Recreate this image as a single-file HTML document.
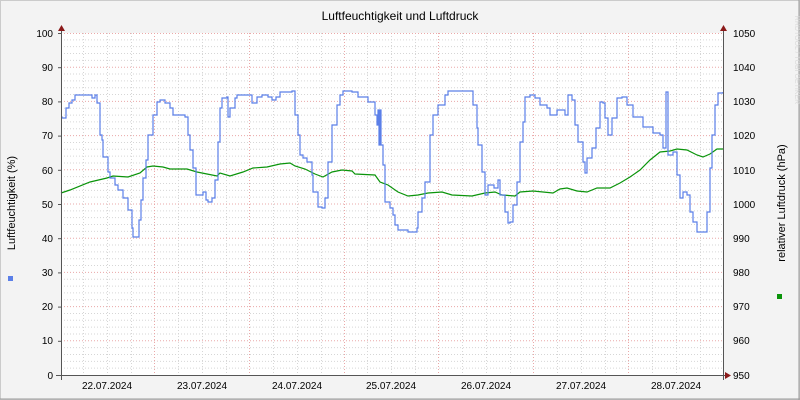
<!DOCTYPE html>
<html><head><meta charset="utf-8"><style>
html,body{margin:0;padding:0;background:#f3f3f3;}
svg{display:block;font-family:"Liberation Sans","DejaVu Sans",sans-serif;}
</style></head><body>
<svg width="800" height="400" viewBox="0 0 800 400" xmlns="http://www.w3.org/2000/svg">
<rect x="0" y="0" width="800" height="400" fill="#f3f3f3"/>
<rect x="0.5" y="0.5" width="799" height="399" fill="none" stroke="#cbcbcb"/>
<line x1="0" y1="399" x2="800" y2="399" stroke="#999" />
<line x1="799" y1="0" x2="799" y2="400" stroke="#999" />
<rect x="61" y="33" width="662" height="342" fill="#fff"/>
<g stroke="#d6d6d6" stroke-width="1" stroke-dasharray="1,2">
<line x1="61" x2="723" y1="39.84" y2="39.84"/><line x1="61" x2="723" y1="46.68" y2="46.68"/><line x1="61" x2="723" y1="53.52" y2="53.52"/><line x1="61" x2="723" y1="60.36" y2="60.36"/>
<line x1="61" x2="723" y1="74.04" y2="74.04"/><line x1="61" x2="723" y1="80.88" y2="80.88"/><line x1="61" x2="723" y1="87.72" y2="87.72"/><line x1="61" x2="723" y1="94.56" y2="94.56"/>
<line x1="61" x2="723" y1="108.24" y2="108.24"/><line x1="61" x2="723" y1="115.08" y2="115.08"/><line x1="61" x2="723" y1="121.92" y2="121.92"/><line x1="61" x2="723" y1="128.76" y2="128.76"/>
<line x1="61" x2="723" y1="142.44" y2="142.44"/><line x1="61" x2="723" y1="149.28" y2="149.28"/><line x1="61" x2="723" y1="156.12" y2="156.12"/><line x1="61" x2="723" y1="162.96" y2="162.96"/>
<line x1="61" x2="723" y1="176.64" y2="176.64"/><line x1="61" x2="723" y1="183.48" y2="183.48"/><line x1="61" x2="723" y1="190.32" y2="190.32"/><line x1="61" x2="723" y1="197.16" y2="197.16"/>
<line x1="61" x2="723" y1="210.84" y2="210.84"/><line x1="61" x2="723" y1="217.68" y2="217.68"/><line x1="61" x2="723" y1="224.52" y2="224.52"/><line x1="61" x2="723" y1="231.36" y2="231.36"/>
<line x1="61" x2="723" y1="245.04" y2="245.04"/><line x1="61" x2="723" y1="251.88" y2="251.88"/><line x1="61" x2="723" y1="258.72" y2="258.72"/><line x1="61" x2="723" y1="265.56" y2="265.56"/>
<line x1="61" x2="723" y1="279.24" y2="279.24"/><line x1="61" x2="723" y1="286.08" y2="286.08"/><line x1="61" x2="723" y1="292.92" y2="292.92"/><line x1="61" x2="723" y1="299.76" y2="299.76"/>
<line x1="61" x2="723" y1="313.44" y2="313.44"/><line x1="61" x2="723" y1="320.28" y2="320.28"/><line x1="61" x2="723" y1="327.12" y2="327.12"/><line x1="61" x2="723" y1="333.96" y2="333.96"/>
<line x1="61" x2="723" y1="347.64" y2="347.64"/><line x1="61" x2="723" y1="354.48" y2="354.48"/><line x1="61" x2="723" y1="361.32" y2="361.32"/><line x1="61" x2="723" y1="368.16" y2="368.16"/>
<line y1="33" y2="375" x1="83.5" x2="83.5"/><line y1="33" y2="375" x1="107.5" x2="107.5"/><line y1="33" y2="375" x1="131.5" x2="131.5"/>
<line y1="33" y2="375" x1="178.5" x2="178.5"/><line y1="33" y2="375" x1="202.5" x2="202.5"/><line y1="33" y2="375" x1="226.5" x2="226.5"/>
<line y1="33" y2="375" x1="273.5" x2="273.5"/><line y1="33" y2="375" x1="297.5" x2="297.5"/><line y1="33" y2="375" x1="321.5" x2="321.5"/>
<line y1="33" y2="375" x1="367.5" x2="367.5"/><line y1="33" y2="375" x1="391.5" x2="391.5"/><line y1="33" y2="375" x1="415.5" x2="415.5"/>
<line y1="33" y2="375" x1="462.5" x2="462.5"/><line y1="33" y2="375" x1="486.5" x2="486.5"/><line y1="33" y2="375" x1="510.5" x2="510.5"/>
<line y1="33" y2="375" x1="557.5" x2="557.5"/><line y1="33" y2="375" x1="581.5" x2="581.5"/><line y1="33" y2="375" x1="605.5" x2="605.5"/>
<line y1="33" y2="375" x1="652.5" x2="652.5"/><line y1="33" y2="375" x1="676.5" x2="676.5"/><line y1="33" y2="375" x1="700.5" x2="700.5"/>
</g>
<g stroke="#eaa8a8" stroke-width="1" stroke-dasharray="1,2">
<line x1="61" x2="723" y1="33.5" y2="33.5"/><line x1="61" x2="723" y1="67.2" y2="67.2"/><line x1="61" x2="723" y1="101.4" y2="101.4"/><line x1="61" x2="723" y1="135.6" y2="135.6"/><line x1="61" x2="723" y1="169.8" y2="169.8"/><line x1="61" x2="723" y1="204" y2="204"/><line x1="61" x2="723" y1="238.2" y2="238.2"/><line x1="61" x2="723" y1="272.4" y2="272.4"/><line x1="61" x2="723" y1="306.6" y2="306.6"/><line x1="61" x2="723" y1="340.8" y2="340.8"/>
<line y1="33" y2="375" x1="154.5" x2="154.5"/><line y1="33" y2="375" x1="249.5" x2="249.5"/><line y1="33" y2="375" x1="344.5" x2="344.5"/><line y1="33" y2="375" x1="438.5" x2="438.5"/><line y1="33" y2="375" x1="533.5" x2="533.5"/><line y1="33" y2="375" x1="628.5" x2="628.5"/>
</g>
<polyline fill="none" stroke="#0a940a" stroke-width="1.2" points="61,193 70,190 90,182 107,178 113,176 128,177 140,173 147,167 153,166 163,167 170,169 187,169 197,172 207,174 217,176 220,173 230,176 243,172 253,168 267,167 280,164 290,163 295,166 305,169 315,174 323,177 332,172 342,170 352,171 355,174 375,175 380,182 388,185 398,192 408,196 418,195 428,193 442,192 452,195 472,196 485,193 495,192 502,195 515,196 520,192 533,191 553,193 560,189 567,188 577,191 587,192 597,188 610,188 620,183 630,177 640,170 650,160 660,152 670,151 677,149 687,150 697,155 703,157 710,154 717,149 723,149"/>
<polyline class="step" fill="none" stroke="#5b7fe8" stroke-width="1.2" points="61,117 62,118 66,108 69,103 72,100 75,95 92,95 92,98 95,95 96,95 97,103 100,135 102,140 103,157 108,172 110,178 115,185 118,190 123,198 128,210 132,228 133,237 138,237 139,220 141,200 143,178 146,160 148,135 153,115 157,102 160,100 165,103 170,108 173,115 185,117 188,135 190,150 193,168 196,195 203,192 206,200 208,202 212,198 215,180 218,142 220,108 222,98 227,97 228,117 230,108 235,98 237,95 250,95 252,103 257,97 262,95 268,97 272,100 276,97 280,92 292,91 295,115 298,135 300,155 303,158 307,162 312,175 313,192 318,207 322,208 325,198 328,162 332,125 337,105 340,95 343,91 352,92 358,97 368,102 375,115 377,125 378,110 379,145 380,110 381,145 383,165 385,202 390,208 393,215 395,225 398,230 408,232 417,228 418,212 422,198 425,182 430,135 433,115 438,105 445,95 448,91 470,91 473,105 477,128 478,145 482,172 485,195 488,185 494,188 498,180 500,195 505,212 508,223 510,222 513,205 517,182 520,142 523,122 525,97 530,95 535,98 540,105 547,108 550,115 557,110 565,115 568,95 572,100 575,125 578,142 583,162 585,173 587,158 592,148 596,128 600,102 603,103 605,118 608,135 612,118 617,98 622,97 627,105 633,117 643,127 653,133 660,135 663,148 666,92 667,92 668,155 673,152 677,175 680,198 683,192 687,195 690,212 693,222 697,232 703,232 707,212 710,168 712,135 715,105 718,93 723,92"/>
<line x1="61.5" y1="28" x2="61.5" y2="380" stroke="#555"/>
<line x1="723.5" y1="28" x2="723.5" y2="380" stroke="#555"/>
<line x1="56" y1="375.5" x2="728" y2="375.5" stroke="#555"/>
<g stroke="#555"><line x1="58" x2="61" y1="33.5" y2="33.5"/><line x1="58" x2="61" y1="67.7" y2="67.7"/><line x1="58" x2="61" y1="101.9" y2="101.9"/><line x1="58" x2="61" y1="136.1" y2="136.1"/><line x1="58" x2="61" y1="170.3" y2="170.3"/><line x1="58" x2="61" y1="204.5" y2="204.5"/><line x1="58" x2="61" y1="238.7" y2="238.7"/><line x1="58" x2="61" y1="272.9" y2="272.9"/><line x1="58" x2="61" y1="307.1" y2="307.1"/><line x1="58" x2="61" y1="341.3" y2="341.3"/></g>
<polygon points="58,31 65,31 61.5,25" fill="#8b1a1a"/>
<polygon points="720,31 727,31 723.5,25" fill="#8b1a1a"/>
<polygon points="725,372 725,379 731,375.5" fill="#8b1a1a"/>
<text x="400" y="20" font-size="12" text-anchor="middle" fill="#000">Luftfeuchtigkeit und Luftdruck</text>
<g font-size="10" fill="#000" text-anchor="end">
<text x="53" y="37">100</text><text x="53" y="71">90</text><text x="53" y="105">80</text><text x="53" y="139">70</text><text x="53" y="174">60</text><text x="53" y="208">50</text><text x="53" y="242">40</text><text x="53" y="276">30</text><text x="53" y="310">20</text><text x="53" y="344">10</text><text x="53" y="379">0</text>
</g>
<g font-size="10" fill="#000">
<text x="733" y="37">1050</text><text x="733" y="71">1040</text><text x="733" y="105">1030</text><text x="733" y="139">1020</text><text x="733" y="174">1010</text><text x="733" y="208">1000</text><text x="733" y="242">990</text><text x="733" y="276">980</text><text x="733" y="310">970</text><text x="733" y="344">960</text><text x="733" y="379">950</text>
</g>
<g font-size="10" fill="#000" text-anchor="middle">
<text x="107" y="389">22.07.2024</text><text x="202" y="389">23.07.2024</text><text x="297" y="389">24.07.2024</text><text x="391" y="389">25.07.2024</text><text x="486" y="389">26.07.2024</text><text x="581" y="389">27.07.2024</text><text x="676" y="389">28.07.2024</text>
</g>
<text transform="translate(15,203) rotate(-90)" font-size="11" text-anchor="middle" fill="#000">Luftfeuchtigkeit (%)</text>
<text transform="translate(785,203) rotate(-90)" font-size="11" text-anchor="middle" fill="#000">relativer Luftdruck (hPa)</text>
<text transform="translate(795,60) rotate(90)" font-size="7" text-anchor="middle" fill="#d8d8d8">RRDTOOL / TOBI OETIKER</text>
<rect x="8" y="276" width="5" height="5" fill="#5b7fe8"/>
<rect x="777" y="294" width="5" height="5" fill="#0a940a"/>
</svg>
<script>
document.querySelectorAll('polyline.step').forEach(function(p){
  var pts=p.getAttribute('points').trim().split(/\s+/).map(function(s){return s.split(',').map(Number);});
  var out=[pts[0]];
  for(var i=1;i<pts.length;i++){out.push([pts[i][0],pts[i-1][1]]);out.push(pts[i]);}
  p.setAttribute('points',out.map(function(a){return a.join(',');}).join(' '));
});
</script>
</body></html>
